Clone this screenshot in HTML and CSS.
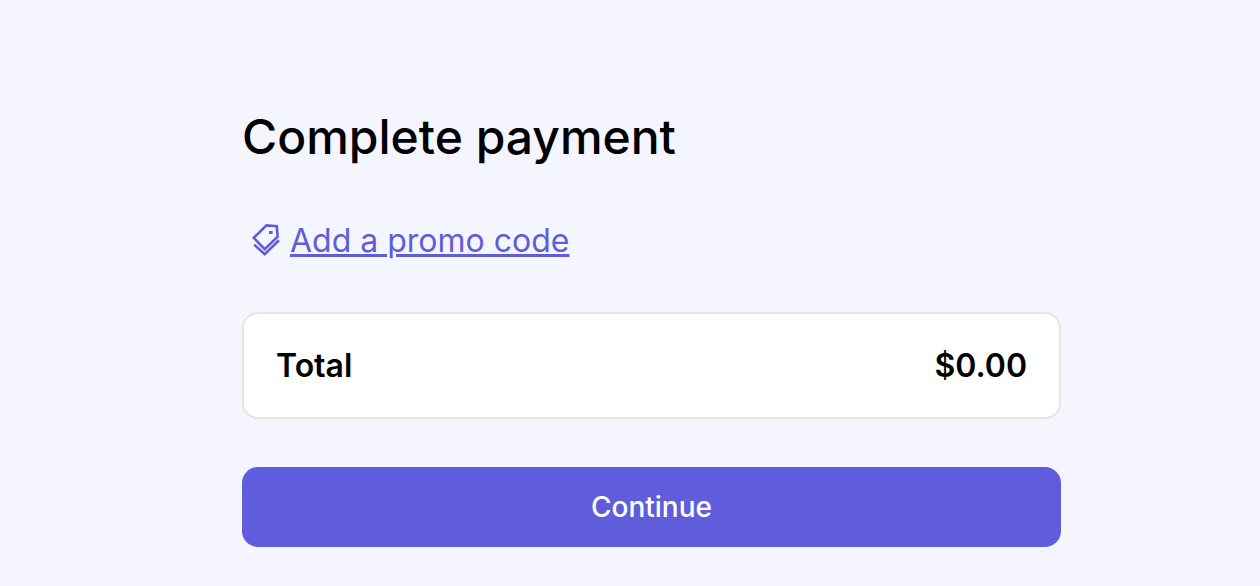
FILE: index.html
```html
<!DOCTYPE html>
<html lang="en">

<head>
    <meta charset="UTF-8">
    <title>Complete payment</title>
    <link rel="stylesheet" href="styles.css">
</head>

<body>
    <main class="payment">
        <h1>Complete payment</h1>
        <div class="promo">
            <svg class="promo-icon" width="32" height="36" viewBox="0 0 32 36" fill="none" stroke="currentColor" stroke-width="2.6" aria-hidden="true">
                <path d="M3.8 14.8L16.5 2.4L26.8 3.3L27.6 13.8L14.7 26.2Z" />
                <path d="M4.2 21.6L14.7 31.2L29 17.2" />
                <rect x="19" y="8" width="3.6" height="3" fill="currentColor" stroke="none" />
            </svg>
            <a href="#">Add a promo code</a>
        </div>
        <div class="total">
            <span>Total</span>
            <span>$0.00</span>
        </div>
        <button type="button" class="continue">Continue</button>
    </main>
</body>

</html>
```
FILE: styles.css
```css
* {
    padding: 0;
    margin: 0;
    box-sizing: border-box;
}

body {
    background: #f5f5ff;
    color: #000;
    font-family: Inter, 'Liberation Sans', sans-serif;
}

.payment {
    padding: 108px 199px 32px 242px;
}

h1 {
    font-size: 48px;
    font-weight: 500;
    line-height: 58px;
}

.promo {
    display: flex;
    align-items: center;
    gap: 8px;
    margin: 55px 0 51px;
    padding-left: 8px;
    color: #5f5ddb;
    font-size: 32px;
    line-height: 40px;
}

.promo a {
    color: inherit;
}

.total {
    display: flex;
    justify-content: space-between;
    padding: 32px;
    background: #fff;
    border: 2px solid #e5e5e5;
    border-radius: 16px;
    font-size: 32px;
    font-weight: 600;
    line-height: 39px;
}

.continue {
    display: block;
    width: 100%;
    height: 80px;
    margin-top: 48px;
    background: #5f5ddb;
    border: none;
    border-radius: 16px;
    color: #fff;
    font-family: inherit;
    font-size: 28px;
    font-weight: 500;
    cursor: pointer;
}
```
